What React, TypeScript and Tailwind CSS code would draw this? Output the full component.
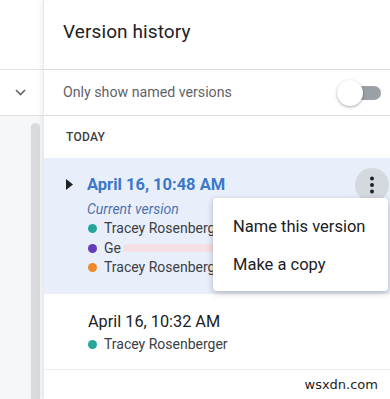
import React from "react";

const font = { fontFamily: "Roboto, 'Liberation Sans', sans-serif" };

const Dot = ({ color }: { color: string }) => (
	<span className={`inline-block w-[9px] h-[9px] rounded-full ${color}`} />
);

const Person = ({ color, name }: { color: string; name: React.ReactNode }) => (
	<div className="flex items-center gap-[7px] h-[19.5px] text-[14px] text-[#3c4043]">
		<Dot color={color} />
		<span>{name}</span>
	</div>
);

export default function App() {
	return (
		<div className="w-[390px] h-[399px] flex bg-white overflow-hidden" style={font}>
			{/* Left strip */}
			<div className="w-[43px] shrink-0 flex flex-col">
				<div className="h-[70px] border-b border-[#e3e3e3] bg-white" />
				<div className="h-[46px] border-b border-[#e3e3e3] bg-white flex items-center pl-[15px]">
					<svg width="11" height="7" viewBox="0 0 11 7">
						<path d="M1 1l4.5 4.5L10 1" fill="none" stroke="#5f6368" strokeWidth="1.6" />
					</svg>
				</div>
				<div className="flex-1 bg-[#f6f7f8] flex pt-[7px] pl-[31px]">
					<div className="w-[9px] h-full rounded-t-full bg-[#d9dadc]" />
				</div>
			</div>

			{/* Right panel */}
			<div className="flex-1 flex flex-col relative border-l border-[#eaeaea] shadow-[-2px_0_4px_rgba(0,0,0,0.06)]">
				<div className="h-[70px] border-b border-[#dadce0] flex items-center pl-[19px] pb-[4px]">
					<span className="text-[19px] text-[#202124] tracking-[0.1px]">Version history</span>
				</div>
				<div className="h-[46px] border-b border-[#dadce0] flex items-center justify-between pl-[19px] pr-[9px]">
					<span className="text-[14.2px] text-[#5f6368]">Only show named versions</span>
					<div className="relative w-[44px] h-[26px] flex items-center">
						<div className="absolute right-0 w-[30px] h-[14px] rounded-full bg-[#9aa0a6]" />
						<div className="absolute left-0 w-[26px] h-[26px] rounded-full bg-white shadow-[0_1px_3px_rgba(0,0,0,0.35)]" />
					</div>
				</div>
				<div className="h-[42px] flex items-center pl-[22px]">
					<span className="text-[12px] font-medium text-[#3c4043] tracking-[0.3px]">TODAY</span>
				</div>

				{/* Current version */}
				<div className="h-[136px] bg-[#e9effa] flex pt-[16px] pl-[22px] pr-[1px]">
					<div className="w-[21px] pt-[5px]">
						<svg width="7" height="11" viewBox="0 0 7 11">
							<path d="M0 0l7 5.5L0 11z" fill="#202124" />
						</svg>
					</div>
					<div className="flex-1 flex flex-col">
						<div className="text-[16.5px] font-bold text-[#3a78cb] leading-[22px]">April 16, 10:48 AM</div>
						<div className="text-[14px] italic text-[#4e72ae] leading-[18px] mt-[4px]">Current version</div>
						<div className="mt-[1px] pl-[1px]">
							<Person color="bg-[#26a69a]" name="Tracey Rosenberger" />
							<Person
								color="bg-[#673ab7]"
								name={
									<span className="flex items-center">
										Ge
										<span className="ml-[2px] w-[92px] h-[8px] bg-[#f4dfe2] rounded-sm" />
									</span>
								}
							/>
							<Person color="bg-[#ef8a2c]" name="Tracey Rosenberger" />
						</div>
					</div>
					<div className="w-[34px] h-[34px] rounded-full bg-[#d4d8df] flex items-center justify-center -mt-[6px]">
						<svg width="4" height="18" viewBox="0 0 4 18">
							<circle cx="2" cy="2.5" r="2" fill="#202124" />
							<circle cx="2" cy="9" r="2" fill="#202124" />
							<circle cx="2" cy="15.5" r="2" fill="#202124" />
						</svg>
					</div>
				</div>

				{/* Older version */}
				<div className="h-[76px] border-b border-[#eeeeee] flex flex-col pl-[44px] pt-[17px]">
					<div className="text-[16.3px] text-[#202124] leading-[22px]">April 16, 10:32 AM</div>
					<div className="mt-[2px]">
						<Person color="bg-[#26a69a]" name="Tracey Rosenberger" />
					</div>
				</div>
				<div className="flex-1 flex items-center justify-end pr-[12px]">
					<span className="text-[13px] text-[#222]" style={{ fontFamily: "'DejaVu Sans', sans-serif" }}>wsxdn.com</span>
				</div>

				{/* Menu */}
				<div className="absolute left-[169px] top-[198px] w-[175px] h-[93px] bg-white rounded-[4px] shadow-[0_2px_6px_rgba(0,0,0,0.25)] flex flex-col pt-[10px]">
					<div className="h-[38px] flex items-center pl-[20px] text-[16.5px] text-[#202124]">Name this version</div>
					<div className="h-[38px] flex items-center pl-[20px] text-[16.5px] text-[#202124]">Make a copy</div>
				</div>
			</div>
		</div>
	);
}
